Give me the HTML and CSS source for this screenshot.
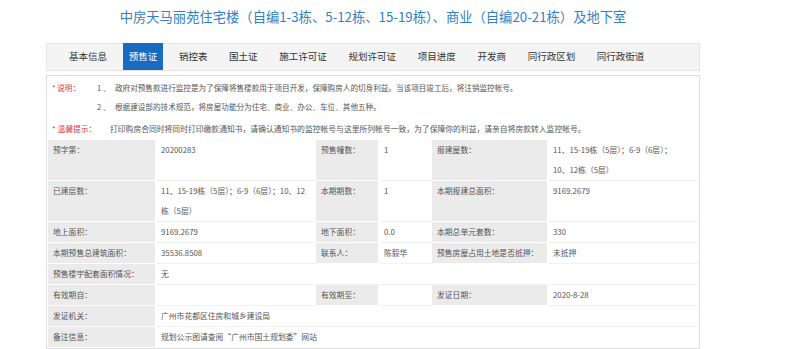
FILE: index.html
```html
<!DOCTYPE html>
<html lang="zh-CN">

<head>
    <meta charset="UTF-8" />
    <meta name="viewport" content="width=device-width, initial-scale=1.0" />
    <title>预售证</title>
    <link rel="stylesheet" href="styles.css">
</head>

<body>
    <div class="wrap">
        <h1 class="title">中房天马丽苑住宅楼（自编1-3栋、5-12栋、15-19栋）、商业（自编20-21栋）及地下室</h1>

        <ul class="tabs">
            <li>基本信息</li>
            <li class="active">预售证</li>
            <li>销控表</li>
            <li>国土证</li>
            <li>施工许可证</li>
            <li>规划许可证</li>
            <li>项目进度</li>
            <li>开发商</li>
            <li>同行政区划</li>
            <li>同行政街道</li>
        </ul>

        <div class="panel">
            <div class="notes">
                <p><span class="note-label">* 说明：</span><span class="num">1 、</span>政府对预售款进行监控是为了保障将售楼款用于项目开发，保障购房人的切身利益。当该项目竣工后，将注销监控帐号。</p>
                <p class="indent"><span class="num">2 、</span>根据建设部的技术规范，将房屋功能分为住宅、商业、办公、车位、其他五种。</p>
                <p class="tip"><span class="note-label wide">* 温馨提示：</span>打印购房合同时将同时打印缴款通知书，请确认通知书的监控帐号与这里所列帐号一致，为了保障你的利益，请亲自将房款转入监控帐号。</p>
            </div>

            <table class="info">
                <colgroup>
                    <col style="width:108px">
                    <col style="width:160px">
                    <col style="width:63px">
                    <col style="width:53px">
                    <col style="width:116px">
                    <col>
                </colgroup>
                <tr>
                    <th>预字第：</th>
                    <td>20200283</td>
                    <th>预售幢数：</th>
                    <td>1</td>
                    <th>报建屋数：</th>
                    <td>11、15-19栋（5层）；6-9（6层）；<br>10、12栋（5层）</td>
                </tr>
                <tr>
                    <th>已建层数：</th>
                    <td>11、15-19栋（5层）；6-9（6层）；10、12<br>栋（5层）</td>
                    <th>本期期数：</th>
                    <td>1</td>
                    <th>本期报建总面积：</th>
                    <td>9169.2679</td>
                </tr>
                <tr>
                    <th>地上面积：</th>
                    <td>9169.2679</td>
                    <th>地下面积：</th>
                    <td>0.0</td>
                    <th>本期总单元套数：</th>
                    <td>330</td>
                </tr>
                <tr>
                    <th>本期预售总建筑面积：</th>
                    <td>35536.8508</td>
                    <th>联系人：</th>
                    <td>陈毅华</td>
                    <th>预售房屋占用土地是否抵押：</th>
                    <td>未抵押</td>
                </tr>
                <tr>
                    <th>预售楼宇配套面积情况：</th>
                    <td colspan="5">无</td>
                </tr>
                <tr>
                    <th>有效期自：</th>
                    <td></td>
                    <th>有效期至：</th>
                    <td></td>
                    <th>发证日期：</th>
                    <td>2020-8-28</td>
                </tr>
                <tr>
                    <th>发证机关：</th>
                    <td colspan="5">广州市花都区住房和城乡建设局</td>
                </tr>
                <tr>
                    <th>备注信息：</th>
                    <td colspan="5">规划公示图请查阅“广州市国土规划委”网站</td>
                </tr>
            </table>
        </div>
    </div>
</body>

</html>
```

FILE: styles.css
```css
body {
    margin: 0;
    background: #fff;
    font-family: "Microsoft YaHei", "Noto Sans CJK SC", sans-serif;
    color: #555;
}

.wrap {
    width: 654px;
    margin-left: 46px;
}

.title {
    margin: 0;
    padding-top: 7px;
    font-size: 13.3px;
    font-weight: normal;
    line-height: 20px;
    text-align: center;
    color: #3281c6;
}

.tabs {
    display: flex;
    gap: 9.7px;
    list-style: none;
    margin: 16px 0 0;
    padding: 0 0 0 16px;
    height: 26px;
    background: #f4f4f4;
    border: 1px solid #e4e4e4;
}

.tabs li {
    padding: 0 6px;
    margin-top: -1px;
    height: 27px;
    line-height: 27px;
    font-size: 9.5px;
    color: #333;
    cursor: pointer;
}

.tabs li.active {
    background: #176cbf;
    color: #fff;
}

.panel {
    margin-top: 4px;
    border: 1px solid #dedede;
}

.notes {
    padding: 2px 5px 0;
    font-size: 7.6px;
}

.notes p {
    margin: 0;
    line-height: 19px;
}

.notes .indent {
    padding-left: 45px;
}

.notes .tip {
    margin-top: 3px;
    line-height: 20px;
    font-size: 7.8px;
}

.note-label {
    display: inline-block;
    width: 45px;
    color: #e0383d;
}

.note-label.wide {
    width: 58px;
}

.num {
    display: inline-block;
    width: 18px;
}

.info {
    width: 100%;
    border-collapse: collapse;
    table-layout: fixed;
    font-size: 7.8px;
}

.info th,
.info td {
    padding: 0 5px;
    line-height: 20px;
    vertical-align: top;
    text-align: left;
    font-weight: normal;
    border: 1px solid #fff;
    border-bottom-color: #f2f2f2;
}

.info th {
    background: #ebebeb;
    border-bottom-color: #fff;
}

.info tr:last-child td {
    border-bottom-color: #fff;
}
```
